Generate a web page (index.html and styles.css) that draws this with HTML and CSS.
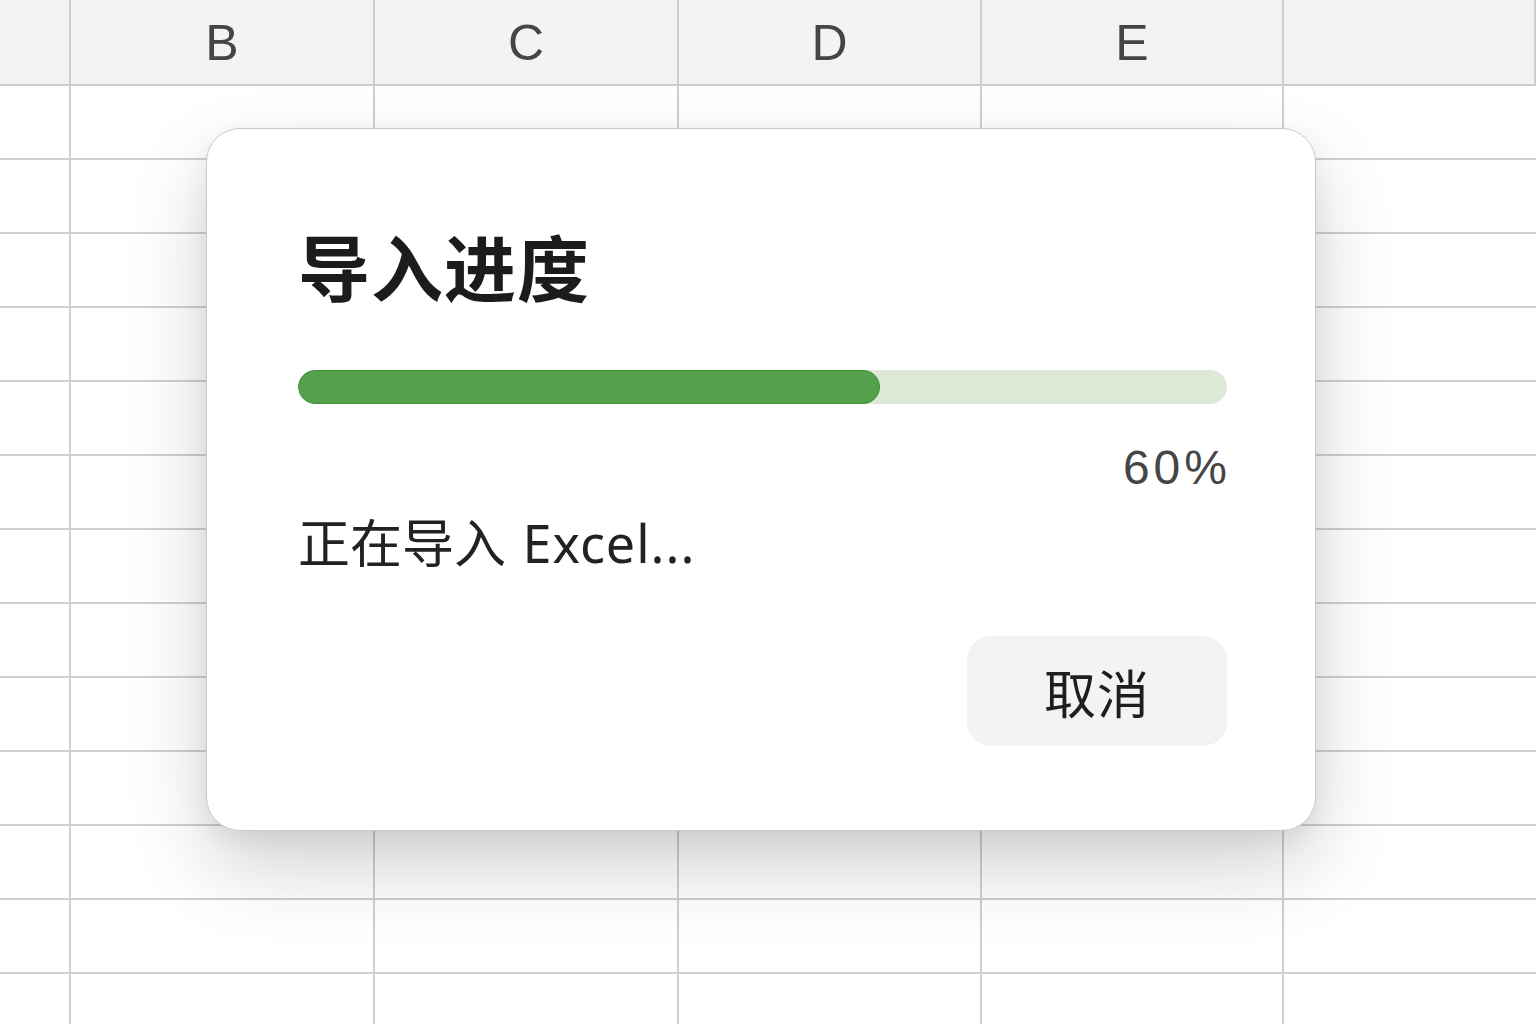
FILE: index.html
```html
<!DOCTYPE html>
<html lang="zh-CN">
<head>
<meta charset="utf-8">
<title>导入进度</title>
<link rel="stylesheet" href="styles.css">
</head>
<body>
<div class="sheet">
  <div class="head corner"></div>
  <div class="head">B</div>
  <div class="head">C</div>
  <div class="head">D</div>
  <div class="head">E</div>
  <div class="head"></div>

  <div class="cell"></div><div class="cell"></div><div class="cell"></div><div class="cell"></div><div class="cell"></div><div class="cell"></div>
  <div class="cell"></div><div class="cell"></div><div class="cell"></div><div class="cell"></div><div class="cell"></div><div class="cell"></div>
  <div class="cell"></div><div class="cell"></div><div class="cell"></div><div class="cell"></div><div class="cell"></div><div class="cell"></div>
  <div class="cell"></div><div class="cell"></div><div class="cell"></div><div class="cell"></div><div class="cell"></div><div class="cell"></div>
  <div class="cell"></div><div class="cell"></div><div class="cell"></div><div class="cell"></div><div class="cell"></div><div class="cell"></div>
  <div class="cell"></div><div class="cell"></div><div class="cell"></div><div class="cell"></div><div class="cell"></div><div class="cell"></div>
  <div class="cell"></div><div class="cell"></div><div class="cell"></div><div class="cell"></div><div class="cell"></div><div class="cell"></div>
  <div class="cell"></div><div class="cell"></div><div class="cell"></div><div class="cell"></div><div class="cell"></div><div class="cell"></div>
  <div class="cell"></div><div class="cell"></div><div class="cell"></div><div class="cell"></div><div class="cell"></div><div class="cell"></div>
  <div class="cell"></div><div class="cell"></div><div class="cell"></div><div class="cell"></div><div class="cell"></div><div class="cell"></div>
  <div class="cell"></div><div class="cell"></div><div class="cell"></div><div class="cell"></div><div class="cell"></div><div class="cell"></div>
  <div class="cell"></div><div class="cell"></div><div class="cell"></div><div class="cell"></div><div class="cell"></div><div class="cell"></div>
  <div class="cell"></div><div class="cell"></div><div class="cell"></div><div class="cell"></div><div class="cell"></div><div class="cell"></div>
</div>

<div class="dialog" role="dialog" aria-labelledby="dlg-title">
  <h1 class="dialog-title" id="dlg-title">导入进度</h1>
  <div class="progress">
    <div class="progress-fill" style="width: 62.6%"></div>
  </div>
  <div class="percent">60%</div>
  <p class="status">正在导入 <span class="status-file">Excel...</span></p>
  <div class="actions">
    <button class="btn-cancel" type="button">取消</button>
  </div>
</div>
</body>
</html>
```

FILE: styles.css
```css
* {
  box-sizing: border-box;
}

html, body {
  margin: 0;
  padding: 0;
  width: 1536px;
  height: 1024px;
  overflow: hidden;
  background: #ffffff;
}

body {
  position: relative;
  font-family: "Noto Sans", "Noto Sans CJK SC", sans-serif;
}

.sheet {
  display: grid;
  grid-template-columns: 71px 304px 304px 303px 302px 1fr;
  grid-auto-rows: 74px;
  grid-template-rows: 86px;
}

.head {
  background: #f3f3f3;
  border-right: 2px solid #cdcdcd;
  border-bottom: 2px solid #cdcdcd;
  display: flex;
  align-items: center;
  justify-content: center;
  font-family: "Liberation Sans", "Noto Sans CJK SC", sans-serif;
  font-size: 50px;
  color: #454545;
  padding-top: 2px;
}

.head:last-child,
.cell:nth-child(6n) {
  border-right: none;
}

.cell {
  background: #ffffff;
  border-right: 2px solid #d0d0d0;
  border-bottom: 2px solid #d0d0d0;
}

.dialog {
  position: absolute;
  left: 206px;
  top: 128px;
  width: 1110px;
  height: 703px;
  background: #ffffff;
  border: 1px solid #c9c9c9;
  border-radius: 34px;
  box-shadow: 0 36px 80px rgba(0, 0, 0, 0.18), 0 8px 24px rgba(0, 0, 0, 0.06);
  padding: 90px 88px 0 91px;
  display: flex;
  flex-direction: column;
}

.dialog-title {
  margin: 0;
  font-family: "Noto Sans CJK SC", sans-serif;
  font-weight: 700;
  font-size: 72px;
  line-height: 92px;
  color: #1c1c1c;
  letter-spacing: 1px;
}

.progress {
  margin-top: 59px;
  height: 34px;
  border-radius: 17px;
  background: #dde8d6;
  overflow: hidden;
}

.progress-fill {
  height: 100%;
  background: #55a04b;
  border: 1.5px solid #3f9134;
  border-radius: 17px;
}

.percent {
  margin-top: 36px;
  align-self: flex-end;
  font-family: "Liberation Sans", sans-serif;
  font-size: 48px;
  line-height: 56px;
  color: #454545;
  letter-spacing: 4px;
  margin-right: -4px;
}

.status {
  margin: 12px 0 0 0;
  font-family: "Noto Sans", "Noto Sans CJK SC", sans-serif;
  font-size: 52px;
  line-height: 70px;
  color: #222222;
  word-spacing: 3px;
}

.status-file {
  letter-spacing: 1px;
}

.actions {
  margin-top: 58px;
  display: flex;
  justify-content: flex-end;
}

.btn-cancel {
  width: 260px;
  height: 110px;
  border: none;
  border-radius: 24px;
  background: #f3f3f3;
  font-family: "Noto Sans CJK SC", sans-serif;
  font-size: 52px;
  color: #1e1e1e;
  padding: 0;
  letter-spacing: 1px;
}
```
